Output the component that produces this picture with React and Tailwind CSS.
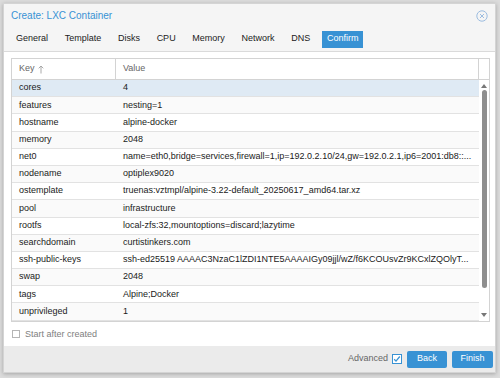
import React from 'react';

const rows = [
  ['cores', '4'],
  ['features', 'nesting=1'],
  ['hostname', 'alpine-docker'],
  ['memory', '2048'],
  ['net0', 'name=eth0,bridge=services,firewall=1,ip=192.0.2.10/24,gw=192.0.2.1,ip6=2001:db8::...'],
  ['nodename', 'optiplex9020'],
  ['ostemplate', 'truenas:vztmpl/alpine-3.22-default_20250617_amd64.tar.xz'],
  ['pool', 'infrastructure'],
  ['rootfs', 'local-zfs:32,mountoptions=discard;lazytime'],
  ['searchdomain', 'curtistinkers.com'],
  ['ssh-public-keys', 'ssh-ed25519 AAAAC3NzaC1lZDI1NTE5AAAAIGy09jjl/wZ/f6KCOUsvZr9KCxlZQOlyT...'],
  ['swap', '2048'],
  ['tags', 'Alpine;Docker'],
  ['unprivileged', '1'],
];

const tabs = ['General', 'Template', 'Disks', 'CPU', 'Memory', 'Network', 'DNS', 'Confirm'];

export default function App() {
  return (
    <div className="w-[500px] h-[378px] bg-[#dcdcdc] pt-[3px] pl-[3px] text-[9px] text-[#1a1a1a]" style={{ fontFamily: '"Liberation Sans", Arial, sans-serif' }}>
      <div className="w-[493px] h-[370px] flex flex-col bg-[#f5f5f5] border border-[#d4d4d4] shadow-[0_1px_4px_rgba(0,0,0,0.25)]">
        {/* title */}
        <div className="flex items-center justify-between h-[23px] pl-[7px] pr-[7px] shrink-0">
          <span className="text-[10px] text-[#3892d4]">Create: LXC Container</span>
          <svg width="12" height="12" viewBox="0 0 12 12" fill="none" stroke="#9dbde0" strokeWidth="1">
            <circle cx="6" cy="6" r="5.2" />
            <path d="M4 4l4 4M8 4l-4 4" />
          </svg>
        </div>
        {/* tabs */}
        <div className="flex items-center h-[25px] pl-[7px] border-b border-[#dadada] shrink-0">
          {tabs.map(t => (
            <div
              key={t}
              className={
                t === 'Confirm'
                  ? 'px-[5px] h-[17px] flex items-center bg-[#3892d4] text-white mr-[6.7px]'
                  : 'px-[5px] h-[17px] flex items-center text-[#222] mr-[6.7px]'
              }
            >
              {t}
            </div>
          ))}
        </div>
        {/* body */}
        <div className="flex-1 bg-white pl-[7px] pr-[5px] pt-[6px] flex flex-col">
          <div className="border border-[#d3d3d3] flex flex-col">
            <div className="flex h-[21px] border-b border-[#d3d3d3] text-[#666] shrink-0">
              <div className="w-[104px] pl-[7px] flex items-center gap-[3px] border-r border-[#d3d3d3]">
                Key
                <svg width="6" height="9" viewBox="0 0 6 9" fill="none" stroke="#a0a0a0" strokeWidth="0.9">
                  <path d="M3 8.5V1M0.7 3.3L3 1l2.3 2.3" />
                </svg>
              </div>
              <div className="flex-1 pl-[7px] flex items-center border-r border-[#d3d3d3]">Value</div>
              <div className="w-[10px]" />
            </div>
            <div className="flex">
              <div className="flex-1 min-w-0">
                {rows.map(([k, v], i) => (
                  <div
                    key={k}
                    className={
                      i === 0
                        ? 'flex h-[17.2px] items-center border-b border-[#e2e2e2] bg-[#dfeaf4]'
                        : i % 2 === 1
                        ? 'flex h-[17.2px] items-center border-b border-[#e2e2e2] bg-[#fafafa]'
                        : 'flex h-[17.2px] items-center border-b border-[#e2e2e2] bg-white'
                    }
                  >
                    <div className="w-[104px] shrink-0 pl-[7px] whitespace-nowrap overflow-hidden">{k}</div>
                    <div className="flex-1 min-w-0 pl-[7px] whitespace-nowrap overflow-hidden">{v}</div>
                  </div>
                ))}
              </div>
              <div className="w-[10px] flex flex-col items-center pt-[4px] pb-[4px]">
                <svg width="6" height="4" viewBox="0 0 6 4"><path d="M3 0L6 4H0z" fill="#777" /></svg>
                <div className="w-[5px] h-[198px] rounded-[3px] bg-[#8e8e8e] mt-[2px]" />
                <div className="flex-1" />
                <svg width="6" height="4" viewBox="0 0 6 4"><path d="M0 0h6L3 4z" fill="#777" /></svg>
              </div>
            </div>
          </div>
          <div className="flex items-center gap-[5px] mt-[6px] pl-[1px] text-[#808080]">
            <div className="w-[8px] h-[8px] border border-[#b5b5b5] bg-white" />
            <span>Start after created</span>
          </div>
        </div>
        {/* footer */}
        <div className="h-[26px] bg-[#ebebeb] flex items-center justify-end pr-[2px] shrink-0">
          <span className="text-[#666] mr-[4px]">Advanced</span>
          <div className="w-[10px] h-[10px] border border-[#3892d4] bg-white flex items-center justify-center mr-[5px]">
            <svg width="8" height="8" viewBox="0 0 8 8" fill="none" stroke="#3892d4" strokeWidth="1.3">
              <path d="M1.2 4.3l1.8 1.8 3.8-4.6" />
            </svg>
          </div>
          <button className="w-[40px] h-[17px] rounded-[2px] bg-[#3892d4] text-white text-[9px] mr-[5px]">Back</button>
          <button className="w-[41px] h-[17px] rounded-[2px] bg-[#3892d4] text-white text-[9px]">Finish</button>
        </div>
      </div>
    </div>
  );
}
